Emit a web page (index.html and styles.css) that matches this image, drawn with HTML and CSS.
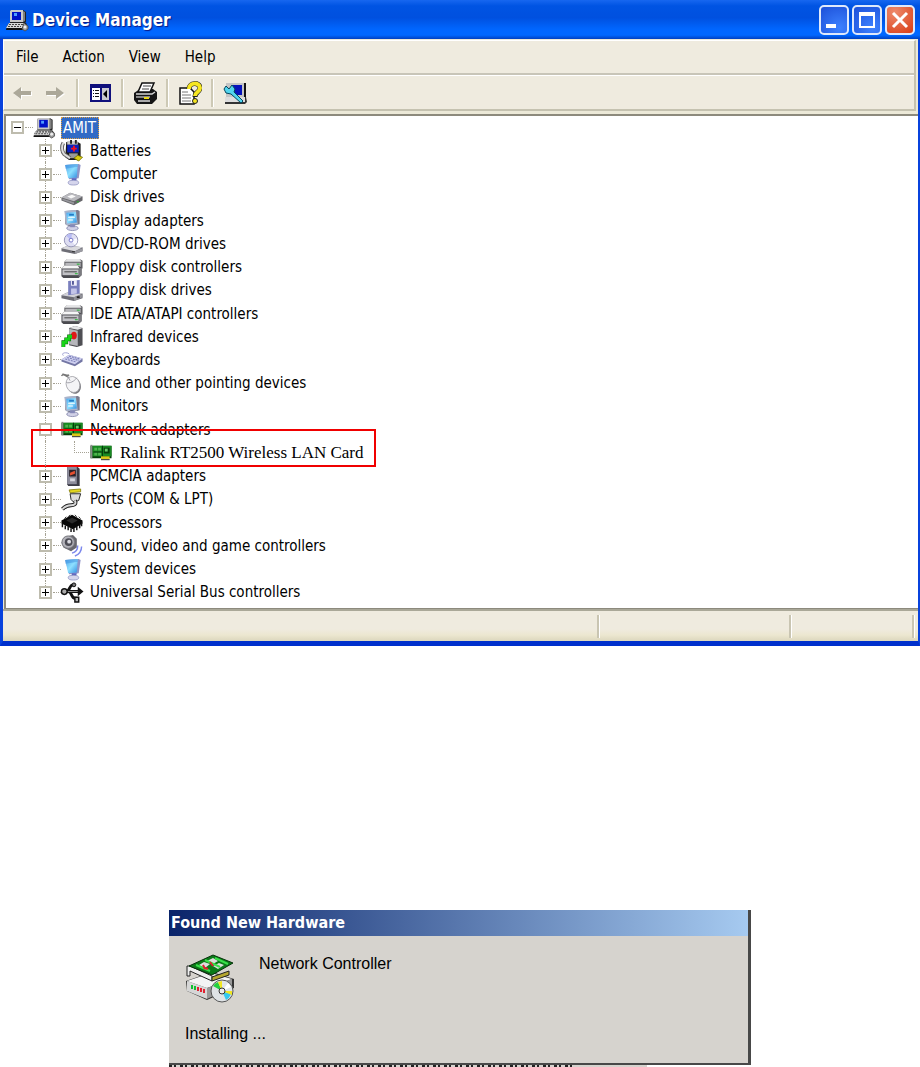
FILE: index.html
```html
<!DOCTYPE html>
<html lang="en">
<head>
    <meta charset="UTF-8">
    <meta name="viewport" content="width=device-width, initial-scale=1.0">
    <title>Device Manager</title>
    <link rel="stylesheet" href="styles.css">
</head>
<body>
    <!-- shared icons -->
    <svg class="sprite" aria-hidden="true">
        <defs>
            <linearGradient id="glass" x1="0" y1="0" x2="1" y2="1"><stop offset="0" stop-color="#4ba6ee"/><stop offset="0.5" stop-color="#8ee0ff"/><stop offset="1" stop-color="#2f8be0"/></linearGradient>
        </defs>
        <symbol id="pc" viewBox="0 0 24 24">
            <path d="M6 2h12l3 2v10l-2 2H5V4z" fill="#222"/>
            <path d="M6 2h12v12H5V3z" fill="#c9c9c9"/>
            <path d="M18 3l2 1v9l-2 1z" fill="#808080"/>
            <path d="M7 4h9v8H7z" fill="#0010c8"/>
            <path d="M9 5h3v3H9z" fill="#4f9cff"/>
            <path d="M4 15h17l1 2-2 5H1l1-4z" fill="#111"/>
            <path d="M4 15h16l-3 5H1z" fill="#d8d8d8"/>
            <path d="M4 16.500h14M3 18.500h13" stroke="#444" stroke-width="1.200" stroke-dasharray="2 1"/>
            <path d="M19 15l4 3v3l-3 2-3-2 1-3z" fill="#9a9a9a" stroke="#444" stroke-width="0.800"/>
            <circle cx="20" cy="19" r="1.500" fill="#eee"/>
        </symbol>
        <symbol id="battery" viewBox="0 0 24 24">
            <path d="M6 3h12l3 2v14l-3 3H9l-4-3z" fill="#1b1b1b"/>
            <path d="M7 2h11v4H7z" fill="#c8c8c8"/>
            <path d="M10 1h2v4h-2zM15 1h2v4h-2z" fill="#222"/>
            <path d="M7 6h12v8H7z" fill="#0a22c0"/>
            <path d="M13 7h2v2h2v2h-2v2h-2v-2h-2V9h2z" fill="#f01020"/>
            <path d="M9 15h9v5H9z" fill="#9a9a9a"/>
            <path d="M3 4c-2 3-2 9 1 12l6 4" fill="none" stroke="#666" stroke-width="4"/>
            <path d="M3 4c-2 3-2 9 1 12l6 4" fill="none" stroke="#dedede" stroke-width="2"/>
            <path d="M14 20l4-3 5 2-4 4z" fill="#d8cc10" stroke="#6e6800" stroke-width="0.800"/>
        </symbol>
        <symbol id="screen" viewBox="0 0 24 24">
            <path d="M5 2l14-1 2 1-2 14-10 1z" fill="#8f93c6"/>
            <path d="M5 2l13-1-1 14-9 1z" fill="url(#glass)"/>
            <path d="M5 2l13-1v3L5 6z" fill="#3f8ddd" opacity="0.500"/>
            <path d="M12 16h5l-1 4h-5z" fill="#5a63c0"/>
            <ellipse cx="13.500" cy="20.500" rx="5.500" ry="2.500" fill="#d5d5ec" stroke="#9094c0" stroke-width="0.800"/>
        </symbol>
        <symbol id="disk" viewBox="0 0 24 24">
            <path d="M1 12l9-5 13 4v4l-9 5-13-5z" fill="#66666a"/>
            <path d="M1 12l9-5 13 4-9 5z" fill="#b9b9be"/>
            <path d="M7 11l5-2 4 2-5 2z" fill="#f8f8f8"/>
            <path d="M2 13l12 4v2L2 14.500z" fill="#97979c"/>
            <path d="M17 16h2v1h-2z" fill="#20c020"/>
        </symbol>
        <symbol id="monitor" viewBox="0 0 24 24">
            <path d="M5 2l13-1 2 1v14l-11 2-4-2z" fill="#797b8d"/>
            <path d="M4 2l12-1 2 15-12 1z" fill="#a9b4cc"/>
            <path d="M6 4l10-1 1 11-10 1z" fill="url(#glass)"/>
            <path d="M8 8h7v1H8zM8 11h5v1H8z" fill="#fff"/>
            <path d="M9 5h5v2H9z" fill="#217dc8"/>
            <ellipse cx="12.500" cy="20" rx="6" ry="2.500" fill="#d0d0e6" stroke="#7b7da5" stroke-width="0.800"/>
            <path d="M10 16h5v3h-5z" fill="#8589b8"/>
        </symbol>
        <symbol id="cdrom" viewBox="0 0 24 24">
            <path d="M1 17l7-3 15 2v4l-8 3-14-3z" fill="#6d6d75"/>
            <path d="M1 17l7-3 15 2-8 4z" fill="#dadade"/>
            <path d="M15 20l8-3v3l-8 3z" fill="#9b9ba2"/>
            <circle cx="11" cy="8.500" r="7" fill="#dedef2" stroke="#9292b5"/>
            <path d="M11 8.500L6 4a7 7 0 0 1 6-2z" fill="#b8bcf4"/>
            <path d="M11 8.500l6-2a6 6 0 0 1-2 7z" fill="#f9f9ff"/>
            <circle cx="11" cy="8.500" r="2" fill="#fff" stroke="#7474c8"/>
            <path d="M12 20h3v1h-3z" fill="#333"/>
        </symbol>
        <symbol id="controller" viewBox="0 0 24 24">
            <path d="M4 6l3-3h13l3 2v8H4z" fill="#5f5f63"/>
            <path d="M4 6l3-3h13l2 3z" fill="#e4e4e6"/>
            <path d="M5 7h16v5H5z" fill="#b8b8bc"/>
            <path d="M17 8h3v1h-3z" fill="#18b828"/>
            <path d="M1 13l3-3h14l4 2v8l-3 3H3l-2-2z" fill="#4b4b50"/>
            <path d="M1 13l3-3h14l2 3z" fill="#f6f6f6"/>
            <path d="M2 14h17v6H2z" fill="#c2c2c6"/>
            <path d="M4 16h13v1H4z" fill="#444"/>
            <path d="M15 18h3v1h-3z" fill="#18b828"/>
            <path d="M19 13l3-1v8l-3 2z" fill="#7b7b80"/>
        </symbol>
        <symbol id="floppy" viewBox="0 0 24 24">
            <path d="M1 17l6-3 16 1v5l-9 3-13-3z" fill="#6d6d75"/>
            <path d="M1 17l6-3 16 1-9 4z" fill="#d2d2d8"/>
            <path d="M14 19l9-3v3l-9 4z" fill="#929299"/>
            <path d="M8 2l12-1v14l-12 2z" fill="#7a7fbe"/>
            <path d="M11 1h6v6h-6z" fill="#f0f0fa"/>
            <path d="M12 2h2v4h-2z" fill="#55599a"/>
            <path d="M11 10h6v5l-6 1z" fill="#c3c5e8"/>
            <path d="M17 18h3v2h-3z" fill="#222"/>
        </symbol>
        <symbol id="infrared" viewBox="0 0 24 24">
            <path d="M9 3l6-2 8 2v18l-6 2-8-2z" fill="#4f4f54"/>
            <path d="M9 3l6-2 8 2-5 2z" fill="#e6e6e8"/>
            <path d="M9 4l9 2v16l-9-2z" fill="#b6b6bb"/>
            <ellipse cx="14" cy="11" rx="3" ry="4" fill="#e01818"/>
            <path d="M3 23v-5h3v-3h3v-3h3" fill="none" stroke="#075f07" stroke-width="4"/>
            <path d="M3 23v-5h3v-3h3v-3h3" fill="none" stroke="#18d418" stroke-width="3"/>
        </symbol>
        <symbol id="keyboard" viewBox="0 0 24 24">
            <path d="M3 8c-3-3 3-4 6-2" fill="none" stroke="#9d9fd0"/>
            <path d="M1 12l8-5 14 4v3l-8 5L1 14z" fill="#7376a4"/>
            <path d="M1 12l8-5 14 4-8 6z" fill="#cfd0f0"/>
            <path d="M5 11.500l11 3M7 10l12 3M9 8.500l11 3" stroke="#7d80b8" stroke-width="1.200" stroke-dasharray="2 1"/>
        </symbol>
        <symbol id="mouse" viewBox="0 0 24 24">
            <path d="M1 4c3-4 5 1 8-1M2 2l7 4" fill="none" stroke="#777" stroke-width="1.500"/>
            <ellipse cx="14" cy="14" rx="7" ry="9" transform="rotate(-20 14 14)" fill="#77777c"/>
            <ellipse cx="13" cy="13" rx="7" ry="8.500" transform="rotate(-20 13 13)" fill="#f4f4f6" stroke="#a2a2a8" stroke-width="0.800"/>
            <path d="M6 11c4 1 8-1 11-5M10 9L8 5" fill="none" stroke="#9d9da5"/>
        </symbol>
        <symbol id="card" viewBox="0 0 24 24">
            <path d="M1 5h22v13H1z" fill="#063d0a"/>
            <path d="M3 5h20v11H3z" fill="#188a22"/>
            <path d="M1 4h2v14H1z" fill="#8a8f8a"/>
            <path d="M5 7h3v3H5zM9 7h3v3H9zM5 12h3v3H5zM9 12h3v3H9z" fill="#4fb44f"/>
            <path d="M13 5h1v12h-1zM4 11h9v1H4z" fill="#03350a"/>
            <path d="M15 7h6v6h-6z" fill="#063d0a"/>
            <path d="M16 8h3v3h-3z" fill="#69c969"/>
            <path d="M12 16h9v3h-9z" fill="#d8c818"/>
            <path d="M12 19h9v1h-9z" fill="#222"/>
        </symbol>
        <symbol id="pcmcia" viewBox="0 0 24 24">
            <path d="M7 2h11l2 2v18H8l-1-2z" fill="#3c3c48"/>
            <path d="M7 2h10v18H7z" fill="#8d8d9c"/>
            <path d="M9 5h7v7H9z" fill="#2a2028"/>
            <path d="M10 8l5-2v3l-5 2z" fill="#e85030"/>
            <path d="M10 14h5v3h-5z" fill="#d5d5df"/>
        </symbol>
        <symbol id="port" viewBox="0 0 24 24">
            <path d="M10 6h11l-2 7-5 2-3-3z" fill="#dcdcdc" stroke="#222"/>
            <path d="M9 2l12-1v3L10 5z" fill="#e4d820" stroke="#7b7400" stroke-width="0.800"/>
            <path d="M15 13c2 4-1 5-4 5s-6 1-9 4" fill="none" stroke="#222" stroke-width="4"/>
            <path d="M15 13c2 4-1 5-4 5s-6 1-9 4" fill="none" stroke="#d8d8d8" stroke-width="2"/>
        </symbol>
        <symbol id="chip" viewBox="0 0 24 24">
            <path d="M1 10l11-6 11 6v3l-10 6L1 13z" fill="#080808"/>
            <path d="M6 10l6-3 6 3-6 3z" fill="#2a2a2a"/>
            <path d="M2 13v4M5 15v4M8 16v4M11 18v4M14 18v4M17 16v4M20 14v4M22 12v4" stroke="#111" stroke-width="1.500"/>
            <path d="M4 8l2-2M8 6l2-2M15 4l2 2M19 6l2 2" stroke="#333"/>
        </symbol>
        <symbol id="sound" viewBox="0 0 24 24">
            <path d="M4 3l9-2 4 4v9l-6 4-8-4-2-5z" fill="#68686e"/>
            <circle cx="8" cy="8.500" r="6.500" fill="#b2b2b9" stroke="#77777d"/>
            <circle cx="8.500" cy="8.500" r="4" fill="#4c4c55"/>
            <circle cx="9" cy="8" r="2" fill="#dcdce2"/>
            <path d="M12 20c4-1 6-4 6-8M15 23c5-2 7-5 7-10" fill="none" stroke="#7c88ec" stroke-width="1.500"/>
        </symbol>
        <symbol id="usb" viewBox="0 0 24 24">
            <path d="M3 11h17M6 11c4 0 3-7 7-7h2M8 11c4 0 3 7 7 7h2" fill="none" stroke="#111" stroke-width="3"/>
            <path d="M6 11h13" stroke="#999"/>
            <circle cx="4" cy="11" r="3" fill="#aaa" stroke="#111" stroke-width="1.500"/>
            <path d="M18 6l6 5-6 5z" fill="#111"/>
            <circle cx="14" cy="4" r="2" fill="#777" stroke="#111"/>
            <path d="M15 17h4v5h-4z" fill="#bbb" stroke="#111" stroke-width="1.500"/>
        </symbol>
    </svg>

    <main class="window">
        <header class="titlebar">
            <svg class="icon"><use href="#pc"/></svg>
            <h1>Device Manager</h1>
            <button class="control" aria-label="Minimize"><svg viewBox="0 0 26 26"><path d="M5 17h10v4H5z" fill="#fff"/></svg></button>
            <button class="control" aria-label="Maximize"><svg viewBox="0 0 26 26"><path d="M5 5h16v16H5zM7 9v10h12V9z" fill="#fff" fill-rule="evenodd"/></svg></button>
            <button class="control close" aria-label="Close"><svg viewBox="0 0 26 26"><path d="M6 6l14 14M20 6L6 20" stroke="#fff" stroke-width="3"/></svg></button>
        </header>

        <div class="frame">
            <nav class="menu">
                <button>File</button>
                <button>Action</button>
                <button>View</button>
                <button>Help</button>
            </nav>
            <div class="toolbar">
                <button aria-label="Back"><svg class="icon" viewBox="0 0 24 24"><path d="M4 13l8-6v4h10v4H12v4z" fill="#fff"/><path d="M3 12l8-6v4h10v4H11v4z" fill="#aca899"/></svg></button>
                <button aria-label="Forward"><svg class="icon" viewBox="0 0 24 24"><path d="M22 13l-8-6v4H4v4h10v4z" fill="#fff"/><path d="M21 12l-8-6v4H3v4h10v4z" fill="#aca899"/></svg></button>
                <span class="sep"></span>
                <button aria-label="Show tree"><svg class="icon" viewBox="0 0 24 24">
                    <path d="M2 3h21v18H2z" fill="#10107c"/><path d="M4 7h8v12H4z" fill="#fff"/><path d="M14 7h7v12h-7z" fill="#c9c9d0"/>
                    <path d="M5 9h1v1H5zM7 9h4v1H7zM5 12h1v1H5zM7 12h4v1H7zM5 15h1v1H5zM7 15h4v1H7z" fill="#111"/><path d="M19 9v8l-4-4z" fill="#000"/>
                </svg></button>
                <span class="sep"></span>
                <button aria-label="Print"><svg class="icon" viewBox="0 0 24 24">
                    <path d="M1 12l6-4h13l4 3v7l-5 5H4l-3-4z" fill="#161616"/>
                    <path d="M9 2h12l-4 9H5z" fill="#fff" stroke="#111" stroke-width="1.500"/>
                    <path d="M10 5h8M9 8h7" stroke="#444"/>
                    <path d="M3 13h16l3-2" fill="none" stroke="#d5d5d5" stroke-width="1.500"/>
                    <path d="M3 15h14v2H3z" fill="#888"/><path d="M11 16h5v2h-5z" fill="#ecd918"/><path d="M5 20h12" stroke="#ddd" stroke-width="1.500"/>
                </svg></button>
                <span class="sep"></span>
                <button aria-label="Help topics"><svg class="icon" viewBox="0 0 24 24">
                    <path d="M2 7h10l4 4v12H2z" fill="#fff" stroke="#111" stroke-width="1.500"/>
                    <path d="M4 11h6M4 14h9M4 17h9M4 20h9" stroke="#777"/>
                    <path d="M11 8c0-7 11-7 11-1 0 4-5 4-5 9" fill="none" stroke="#222" stroke-width="5"/>
                    <path d="M11 8c0-7 11-7 11-1 0 4-5 4-5 8" fill="none" stroke="#f6e622" stroke-width="4"/>
                    <circle cx="17" cy="20" r="2.500" fill="#f6e622" stroke="#222"/>
                </svg></button>
                <span class="sep"></span>
                <button aria-label="Scan for hardware changes"><svg class="icon" viewBox="0 0 24 24">
                    <path d="M3 2h20v15H3z" fill="#111"/><path d="M3 2h18v14H3z" fill="#c5c5c5"/><path d="M9 4h10v10H9z" fill="#0713bb"/>
                    <path d="M2 16h21l1 5-2 2H2z" fill="#333"/><path d="M2 16h20v5H2z" fill="#ddd"/>
                    <path d="M3 5l3 3 3-4 3 4-1 3 9 9-2 2-10-9-5-1-2-4z" fill="#52d5ee" stroke="#06475e"/>
                </svg></button>
            </div>
        </div>

        <ul class="tree">
            <li class="root"><button class="toggle open" aria-label="Collapse"></button><svg class="icon"><use href="#pc"/></svg><span class="selected">AMIT</span></li>
            <li><button class="toggle" aria-label="Expand"></button><svg class="icon"><use href="#battery"/></svg><span>Batteries</span></li>
            <li><button class="toggle" aria-label="Expand"></button><svg class="icon"><use href="#screen"/></svg><span>Computer</span></li>
            <li><button class="toggle" aria-label="Expand"></button><svg class="icon"><use href="#disk"/></svg><span>Disk drives</span></li>
            <li><button class="toggle" aria-label="Expand"></button><svg class="icon"><use href="#monitor"/></svg><span>Display adapters</span></li>
            <li><button class="toggle" aria-label="Expand"></button><svg class="icon"><use href="#cdrom"/></svg><span>DVD/CD-ROM drives</span></li>
            <li><button class="toggle" aria-label="Expand"></button><svg class="icon"><use href="#controller"/></svg><span>Floppy disk controllers</span></li>
            <li><button class="toggle" aria-label="Expand"></button><svg class="icon"><use href="#floppy"/></svg><span>Floppy disk drives</span></li>
            <li><button class="toggle" aria-label="Expand"></button><svg class="icon"><use href="#controller"/></svg><span>IDE ATA/ATAPI controllers</span></li>
            <li><button class="toggle" aria-label="Expand"></button><svg class="icon"><use href="#infrared"/></svg><span>Infrared devices</span></li>
            <li><button class="toggle" aria-label="Expand"></button><svg class="icon"><use href="#keyboard"/></svg><span>Keyboards</span></li>
            <li><button class="toggle" aria-label="Expand"></button><svg class="icon"><use href="#mouse"/></svg><span>Mice and other pointing devices</span></li>
            <li><button class="toggle" aria-label="Expand"></button><svg class="icon"><use href="#monitor"/></svg><span>Monitors</span></li>
            <li><button class="toggle open muted" aria-label="Collapse"></button><svg class="icon"><use href="#card"/></svg><span>Network adapters</span></li>
            <li class="device"><i class="branch"></i><svg class="icon"><use href="#card"/></svg><span>Ralink RT2500 Wireless LAN Card</span><i class="highlight"></i></li>
            <li><button class="toggle" aria-label="Expand"></button><svg class="icon"><use href="#pcmcia"/></svg><span>PCMCIA adapters</span></li>
            <li><button class="toggle" aria-label="Expand"></button><svg class="icon"><use href="#port"/></svg><span>Ports (COM &amp; LPT)</span></li>
            <li><button class="toggle" aria-label="Expand"></button><svg class="icon"><use href="#chip"/></svg><span>Processors</span></li>
            <li><button class="toggle" aria-label="Expand"></button><svg class="icon"><use href="#sound"/></svg><span>Sound, video and game controllers</span></li>
            <li><button class="toggle" aria-label="Expand"></button><svg class="icon"><use href="#screen"/></svg><span>System devices</span></li>
            <li><button class="toggle" aria-label="Expand"></button><svg class="icon"><use href="#usb"/></svg><span>Universal Serial Bus controllers</span></li>
        </ul>

        <footer class="status"><span></span><span></span><span></span></footer>
    </main>

    <section class="dialog">
        <h2>Found New Hardware</h2>
        <div class="dialog-body">
            <svg class="hardware" viewBox="0 0 50 50">
                <path d="M1 28l26-9 22 7v9L22 47 2 38z" fill="#333"/>
                <path d="M2 28l20 7v11L2 38z" fill="#d6d6d6"/>
                <path d="M2 28l24-8 21 6-25 9z" fill="#f4f4f4"/>
                <path d="M22 35l25-9v8L22 46z" fill="#999"/>
                <path d="M7 32v4M10 33v4" stroke="#10c030" stroke-width="2"/>
                <path d="M13 34v4M16 35v4M19 36v4" stroke="#e02030" stroke-width="2"/>
                <path d="M2 13h3l22 10v5L5 18v5H2z" fill="#eee" stroke="#222"/>
                <path d="M27 24l17-6v4l-17 6z" fill="#b5a630" stroke="#222"/>
                <path d="M4 13L28 2l20 8-21 12z" fill="#0b7a18" stroke="#06330a"/>
                <path d="M14 12l5-3 6 2-5 4zM22 8l6-3 5 3-5 3zM28 13l6-3 5 2-6 4z" fill="#ddd"/>
                <path d="M11 12l14 6M20 7l15 7M30 5l13 6" stroke="#39e04a" stroke-width="2"/>
                <path d="M18 12l2 4M25 9l3 4M20 15l3 1" stroke="#e02030" stroke-width="2"/>
                <circle cx="37" cy="38" r="11" fill="#dfe3e6" stroke="#555"/>
                <path d="M37 38l-9-5a10 10 0 0 1 5-4z" fill="#24d040"/>
                <path d="M37 38l-4-9 4-1z" fill="#f2e520"/>
                <path d="M37 38l9 3a10 10 0 0 1-5 6z" fill="#35c9ef"/>
                <path d="M37 38l10 0v4z" fill="#f2e520"/>
                <path d="M37 38l6-8 3 4z" fill="#fff"/>
                <circle cx="37" cy="38" r="3" fill="#eee" stroke="#333"/>
            </svg>
            <p>Network Controller</p>
            <p class="progress">Installing ...</p>
        </div>
    </section>
    <div class="behind"><div></div></div>
</body>
</html>
```
FILE: styles.css
```css
* {
    box-sizing: border-box;
}
body {
    margin: 0;
    background: #fff;
    color: #000;
    font-family: "DejaVu Sans Condensed", "DejaVu Sans", sans-serif;
    font-size: 15px;
}
button {
    margin: 0;
    padding: 0;
    border: none;
    background: none;
    font: inherit;
    color: inherit;
}
.sprite {
    position: absolute;
    width: 0;
    height: 0;
}
.icon {
    display: block;
    flex: none;
    width: 24px;
    height: 24px;
}

/* main window */
.window {
    border: solid #0842dd;
    border-width: 0 2px 5px 3px;
    border-bottom-color: #0030cc;
    background: #ece9d8;
}
.titlebar {
    display: flex;
    align-items: center;
    gap: 3px;
    height: 39px;
    margin: 0 -2px 0 -3px;
    padding: 0 5px;
    background: linear-gradient(#1767f0, #0054e3 15%, #0050df 45%, #0066ff 75%, #0068ff 90%, #0040c0);
}
h1 {
    flex: 1;
    margin: 0;
    font-size: 17px;
    font-weight: bold;
    color: #fff;
    text-shadow: 1px 1px 1px #0a1883;
}
.control {
    width: 30px;
    height: 30px;
    border: 2px solid #dfe9fb;
    border-radius: 5px;
    background: radial-gradient(circle at 70% 80%, #3d82ff, #1c4fd8);
}
.control svg {
    display: block;
}
.close {
    background: radial-gradient(circle at 30% 20%, #ee8a6c, #d83c14);
}
.frame {
    margin: 1px 2px 0 0;
    border: 1px solid #fff;
    border-right: 2px solid #c5c2b0;
    border-bottom: 2px solid #c5c2b0;
    background: #efebdf;
}
.menu {
    display: flex;
    gap: 24px;
    height: 34px;
    padding: 0 12px;
    border-bottom: 2px solid #c8c5b8;
}
.toolbar {
    display: flex;
    align-items: center;
    gap: 9px;
    height: 34px;
    padding: 0 6px;
    border-top: 1px solid #fff;
}
.sep {
    width: 3px;
    height: 28px;
    border-left: 2px solid #cdc9b5;
    border-right: 1px solid #fff;
}

/* device tree */
.tree {
    display: grid;
    grid-auto-rows: 1fr;
    min-height: 495px;
    margin: 3px 0 0 1px;
    padding: 0 0 4px;
    border: solid #8d8a7d;
    border-width: 2px 0 1px 2px;
    background: #fff;
    list-style: none;
}
.tree li {
    display: flex;
    position: relative;
    align-items: center;
    padding-left: 33px;
    white-space: nowrap;
}
.tree li .icon {
    height: 23px;
    margin: 0 6px 0 8px;
}
.tree .root .icon {
    margin-right: 5px;
}
.tree li::before {
    content: "";
    position: absolute;
    top: 0;
    bottom: 0;
    left: 39px;
    border-left: 1px dotted #a5a294;
}
.tree li:last-child::before {
    bottom: 50%;
}
.tree li::after {
    content: "";
    position: absolute;
    left: 47px;
    width: 8px;
    border-top: 1px dotted #a5a294;
}
.tree .root {
    padding-left: 5px;
}
.tree .root::before {
    display: none;
}
.tree .root::after {
    left: 19px;
}
.toggle {
    position: relative;
    flex: none;
    width: 13px;
    height: 13px;
    border: 2px solid #bebcae;
    background:
        linear-gradient(#000, #000) center / 7px 1px no-repeat,
        linear-gradient(#000, #000) center / 1px 7px no-repeat,
        #fff;
}
.toggle.open {
    background: linear-gradient(#000, #000) center / 7px 1px no-repeat, #fff;
}
.toggle.muted {
    background: linear-gradient(#aaa, #aaa) center / 7px 1px no-repeat, #fff;
}
.selected {
    padding: 0 2px 0 1px;
    border: 1px dotted #e0a040;
    background: #316ac5;
    color: #fff;
    line-height: 20px;
}
.tree .device {
    padding-left: 68px;
    font-family: "Liberation Serif", serif;
    font-size: 17px;
}
.tree .device::after {
    display: none;
}
.tree .device .icon {
    margin: 0 7px 0 0;
}
.branch {
    align-self: flex-start;
    width: 15px;
    height: 12px;
    border: dotted #a5a294;
    border-width: 0 0 1px 1px;
}
.highlight {
    position: absolute;
    top: -12px;
    left: 25px;
    width: 345px;
    height: 38px;
    border: 2px solid #f00000;
}

/* status bar */
.status {
    display: flex;
    height: 32px;
    padding: 4px 3px 3px 0;
    border-top: 2px solid #aaa898;
    background: linear-gradient(#efebdf 60%, #ece7d0 80%, #dcd7bd);
}
.status span {
    border-right: 1px solid #fff;
    box-shadow: inset -2px 0 #c9c5b2;
}
.status span:first-child {
    flex: 1;
}
.status span:nth-child(2) {
    width: 192px;
}
.status span:last-child {
    width: 123px;
}

/* install notice */
.dialog {
    width: 582px;
    max-width: 100%;
    margin: 264px auto 0;
    border: solid #484848;
    border-width: 0 3px 2px 0;
    background: #d6d3ce;
}
h2 {
    margin: 0;
    padding-left: 2px;
    background: linear-gradient(90deg, #0a246a, #a6caf0);
    color: #fff;
    font-size: 16px;
    line-height: 26px;
}
.dialog-body {
    display: grid;
    grid-template-columns: 50px 1fr;
    column-gap: 24px;
    padding: 17px 16px 18px;
    font-family: "Liberation Sans", sans-serif;
    font-size: 16px;
}
.dialog-body p {
    margin: 0;
    line-height: 22px;
}
.hardware {
    width: 50px;
    height: 50px;
}
.dialog-body .progress {
    grid-column: 1 / 3;
    margin-top: 20px;
}

/* sliver of the window under the notice */
.behind {
    width: 582px;
    max-width: 100%;
    margin: 0 auto;
    padding-right: 104px;
    background: linear-gradient(#d6d3ce, #d6d3ce) 0 0 / 478px 2px no-repeat;
}
.behind div {
    width: 405px;
    height: 2px;
    background: repeating-linear-gradient(90deg, #222 0 3px, #d6d3ce 3px 5px, #222 5px 7px, #d6d3ce 7px 11px);
}
```
